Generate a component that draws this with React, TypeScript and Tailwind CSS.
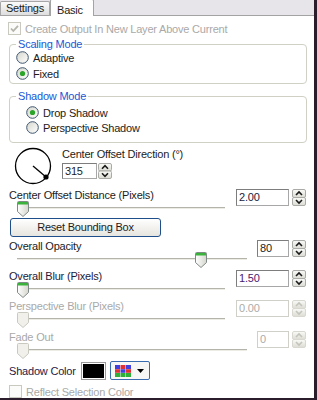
import React from "react";

function Radio({ checked }: { checked?: boolean }) {
  return (
    <svg width="13" height="13" viewBox="0 0 13 13" className="shrink-0">
      <defs>
        <linearGradient id="radgrad" x1="0" y1="0" x2="1" y2="1">
          <stop offset="0" stopColor="#d6d6ce" />
          <stop offset="1" stopColor="#ffffff" />
        </linearGradient>
      </defs>
      <circle cx="6.5" cy="6.5" r="5.8" fill="url(#radgrad)" stroke="#3d5670" strokeWidth="1" />
      {checked && <circle cx="6.5" cy="6.5" r="2.6" fill="#2aa52a" />}
    </svg>
  );
}

function Check({ checked }: { checked?: boolean }) {
  return (
    <svg width="13" height="13" viewBox="0 0 13 13" className="shrink-0">
      <rect x="0.5" y="0.5" width="12" height="12" fill="#fbfbf9" stroke="#c9c9bf" />
      {checked && (
        <path d="M3 6.5 L5.3 9 L10 3.8" fill="none" stroke="#b4b4ac" strokeWidth="1.8" />
      )}
    </svg>
  );
}

function Spin({ disabled, h = 17 }: { disabled?: boolean; h?: number }) {
  const half = (h - 1) / 2;
  const c = disabled ? "#c4c4bc" : "#1a1a1a";
  const b = disabled ? "#d8d8d0" : "#a9aca6";
  return (
    <svg width="14" height={h} viewBox={`0 0 14 ${h}`} className="shrink-0">
      <defs>
        <linearGradient id="spg" x1="0" y1="0" x2="0" y2="1">
          <stop offset="0" stopColor="#fafaf8" />
          <stop offset="1" stopColor="#dcdcd4" />
        </linearGradient>
      </defs>
      <rect x="0.5" y="0.5" width="13" height={half} rx="1.5" fill="url(#spg)" stroke={b} />
      <rect x="0.5" y={half + 0.5} width="13" height={half} rx="1.5" fill="url(#spg)" stroke={b} />
      <path d={`M4 ${half / 2 + 2} L7 ${half / 2 - 1} L10 ${half / 2 + 2}`} fill="none" stroke={c} strokeWidth="1.6" />
      <path d={`M4 ${half + half / 2 - 1} L7 ${half + half / 2 + 2} L10 ${half + half / 2 - 1}`} fill="none" stroke={c} strokeWidth="1.6" />
    </svg>
  );
}

function Thumb({ disabled }: { disabled?: boolean }) {
  return (
    <svg width="12" height="16" viewBox="0 0 12 16">
      <defs>
        <linearGradient id="thg" x1="0" y1="0" x2="1" y2="0">
          <stop offset="0" stopColor="#ffffff" />
          <stop offset="1" stopColor="#d6d6ce" />
        </linearGradient>
      </defs>
      <path
        d="M1.5 0.5 H10.5 Q11.5 0.5 11.5 1.5 V10.5 L6 15.5 L0.5 10.5 V1.5 Q0.5 0.5 1.5 0.5 Z"
        fill={disabled ? "#f1f0ea" : "url(#thg)"}
        stroke={disabled ? "#c9c9c0" : "#7f8a86"}
      />
      {!disabled && <rect x="1" y="1" width="10" height="2.5" fill="#3bb23b" />}
    </svg>
  );
}

function NumBox({ value, w, disabled, color }: { value: string; w: string; disabled?: boolean; color?: string }) {
  return (
    <div
      className={`${w} h-[17px] flex items-center pl-[2px] border ${
        disabled ? "border-[#d0d0c8] text-[#ababab]" : "border-[#a7a7a7] border-t-[#7d7d7d] border-l-[#7d7d7d]"
      } bg-white leading-none`}
      style={!disabled && color ? { color } : undefined}
    >
      {value}
    </div>
  );
}

type SliderProps = {
  label: string;
  frac: number;
  long: boolean;
  disabled?: boolean;
  value: string;
  labelColor?: string;
  valueColor?: string;
  cls?: string;
};

function SliderRow({ label, frac, long, disabled, value, labelColor, valueColor, cls }: SliderProps) {
  const trackW = long ? 208 : 230;
  const left = Math.round(frac * (trackW - 12));
  return (
    <div className={`flex justify-between items-start ${cls ?? ""}`}>
      <div className="flex flex-col">
        <div
          className={`h-[12px] leading-[12px] whitespace-nowrap ${disabled ? "text-[#a9a9a9]" : "text-[#1c1c1c]"}`}
          style={!disabled && labelColor ? { color: labelColor } : undefined}
        >
          {label}
        </div>
        <div className={`relative h-[15px] ml-[8px] ${long ? "w-[208px]" : "w-[230px]"}`}>
          <div className="absolute left-0 right-0 top-[6px] h-[2px] border-t border-[#b4b4aa] bg-[#ecebe4]" />
          <div className="absolute top-0" style={{ left }}>
            <Thumb disabled={disabled} />
          </div>
        </div>
      </div>
      <div className="flex gap-[3px] mr-px">
        <NumBox value={value} w={long ? "w-[53px]" : "w-[32px]"} disabled={disabled} color={valueColor} />
        <Spin disabled={disabled} />
      </div>
    </div>
  );
}

export default function App() {
  return (
    <div className="w-[317px] h-[400px] overflow-hidden bg-white border-r-[3px] border-b-[2px] border-[#2b1d2c] flex flex-col font-['Liberation_Sans',Arial,sans-serif] text-[11px] tracking-[-0.2px] text-[#1c1c1c]">
      {/* Tabs */}
      <div className="h-[16px] shrink-0 flex items-end bg-[#e7e5ea] border-b border-[#a3a3a3]">
        <div className="h-[15px] w-[50px] -mb-px flex items-center justify-center border border-[#a6a6a6] border-b-[#a3a3a3] rounded-t-[2px] bg-gradient-to-b from-[#fbfbfb] to-[#dedede]">
          Settings
        </div>
        <div className="relative z-10 h-[17px] w-[44px] -mb-px flex items-start pt-[2px] pl-[6px] bg-white border border-b-0 border-[#a3a3a3] rounded-t-[2px]">
          Basic
        </div>
      </div>

      <div className="flex flex-col pl-[9px] pr-[7px]">
        {/* Create output checkbox */}
        <div className="mt-[6px] h-[13px] flex items-center -ml-px gap-[4px] text-[#a9a9a9]">
          <Check checked />
          <span className="leading-[12px] whitespace-nowrap">Create Output In New Layer Above Current</span>
        </div>

        {/* Scaling Mode */}
        <fieldset className="mt-[3px] border border-[#d0d0c4] rounded-[4px] pb-[3px]">
          <legend className="ml-[6px] px-[2px] leading-[12px] text-[#2157d5]">Scaling Mode</legend>
          <div className="flex flex-col gap-[3px] pt-[1px] pl-[6px]">
            <div className="h-[13px] flex items-center gap-[4px]">
              <Radio />
              <span className="leading-[12px]">Adaptive</span>
            </div>
            <div className="h-[13px] flex items-center gap-[4px]">
              <Radio checked />
              <span className="leading-[12px]">Fixed</span>
            </div>
          </div>
        </fieldset>

        {/* Shadow Mode */}
        <fieldset className="mt-[6px] border border-[#d0d0c4] rounded-[4px] pb-[8px]">
          <legend className="ml-[6px] px-[2px] leading-[12px] text-[#2157d5]">Shadow Mode</legend>
          <div className="flex flex-col gap-[2px] pt-[4px] pl-[16px]">
            <div className="h-[13px] flex items-center gap-[4px]">
              <Radio checked />
              <span className="leading-[12px]">Drop Shadow</span>
            </div>
            <div className="h-[13px] flex items-center gap-[4px]">
              <Radio />
              <span className="leading-[12px]">Perspective Shadow</span>
            </div>
          </div>
        </fieldset>

        {/* Dial row */}
        <div className="mt-[4px] h-[39px] flex items-start">
          <svg width="42" height="40" viewBox="0 0 42 40" className="ml-[4px] shrink-0">
            <circle cx="20" cy="19" r="17.5" fill="white" stroke="#000" strokeWidth="1.3" />
            <line x1="20" y1="19" x2="33" y2="30" stroke="#000" strokeWidth="1.3" />
            <circle cx="33" cy="30" r="2.6" fill="#000" />
          </svg>
          <div className="ml-[7px] flex flex-col">
            <div className="mt-[1px] h-[12px] leading-[12px] whitespace-nowrap">Center Offset Direction (°)</div>
            <div className="mt-[3px] flex gap-px">
              <div className="w-[35px] h-[16px] flex items-center pl-[2px] border border-[#a7a7a7] border-t-[#7d7d7d] border-l-[#7d7d7d] leading-none">
                315
              </div>
              <Spin h={16} />
            </div>
          </div>
        </div>

        <SliderRow label="Center Offset Distance (Pixels)" frac={0} long value="2.00" cls="mt-[3px]" valueColor="#1a1a3a" />

        {/* Reset button */}
        <div className="mt-[2px] ml-px w-[151px] h-[19px] flex items-center justify-center border border-[#1f4f8a] rounded-[3px] bg-gradient-to-b from-[#ffffff] to-[#e6e5df] whitespace-nowrap">
          Reset Bounding Box
        </div>

        <SliderRow label="Overall Opacity" frac={0.815} long={false} value="80" cls="mt-[3px]" />
        <SliderRow label="Overall Blur (Pixels)" frac={0} long value="1.50" cls="mt-[3px]" labelColor="#241a3a" valueColor="#4a2070" />
        <SliderRow label="Perspective Blur (Pixels)" frac={0} long disabled value="0.00" cls="mt-[3px]" />
        <SliderRow label="Fade Out" frac={0} long={false} disabled value="0" cls="mt-[4px]" />

        {/* Shadow color */}
        <div className="mt-[3px] h-[19px] flex items-center">
          <span className="w-[72px] leading-[12px] whitespace-nowrap text-[#232048]">Shadow Color</span>
          <div className="w-[25px] h-[18px] border border-[#9a9a9a] p-px bg-white">
            <div className="w-full h-full bg-black" />
          </div>
          <div className="ml-[4px] w-[40px] h-[19px] flex items-center border border-[#3a6cb0] rounded-[2px] bg-[#f7f7f5] pl-[4px] gap-[6px]">
            <svg width="16" height="12" viewBox="0 0 16 12">
              <rect x="0" y="0" width="5" height="4" fill="#4141e0" />
              <rect x="5.5" y="0" width="5" height="4" fill="#e03232" />
              <rect x="11" y="0" width="5" height="4" fill="#4141e0" />
              <rect x="0" y="4.2" width="5" height="3.6" fill="#e03232" />
              <rect x="5.5" y="4.2" width="5" height="3.6" fill="#4141e0" />
              <rect x="11" y="4.2" width="5" height="3.6" fill="#e03232" />
              <rect x="0" y="8" width="5" height="4" fill="#2fae3a" />
              <rect x="5.5" y="8" width="5" height="4" fill="#2fae3a" />
              <rect x="11" y="8" width="5" height="4" fill="#2fae3a" />
            </svg>
            <svg width="7" height="4" viewBox="0 0 7 4">
              <path d="M0 0 H7 L3.5 4 Z" fill="#000" />
            </svg>
          </div>
        </div>

        {/* Reflect */}
        <div className="mt-[5px] h-[13px] flex items-center gap-[4px] text-[#a9a9a9]">
          <Check />
          <span className="leading-[12px] whitespace-nowrap">Reflect Selection Color</span>
        </div>
      </div>
    </div>
  );
}
